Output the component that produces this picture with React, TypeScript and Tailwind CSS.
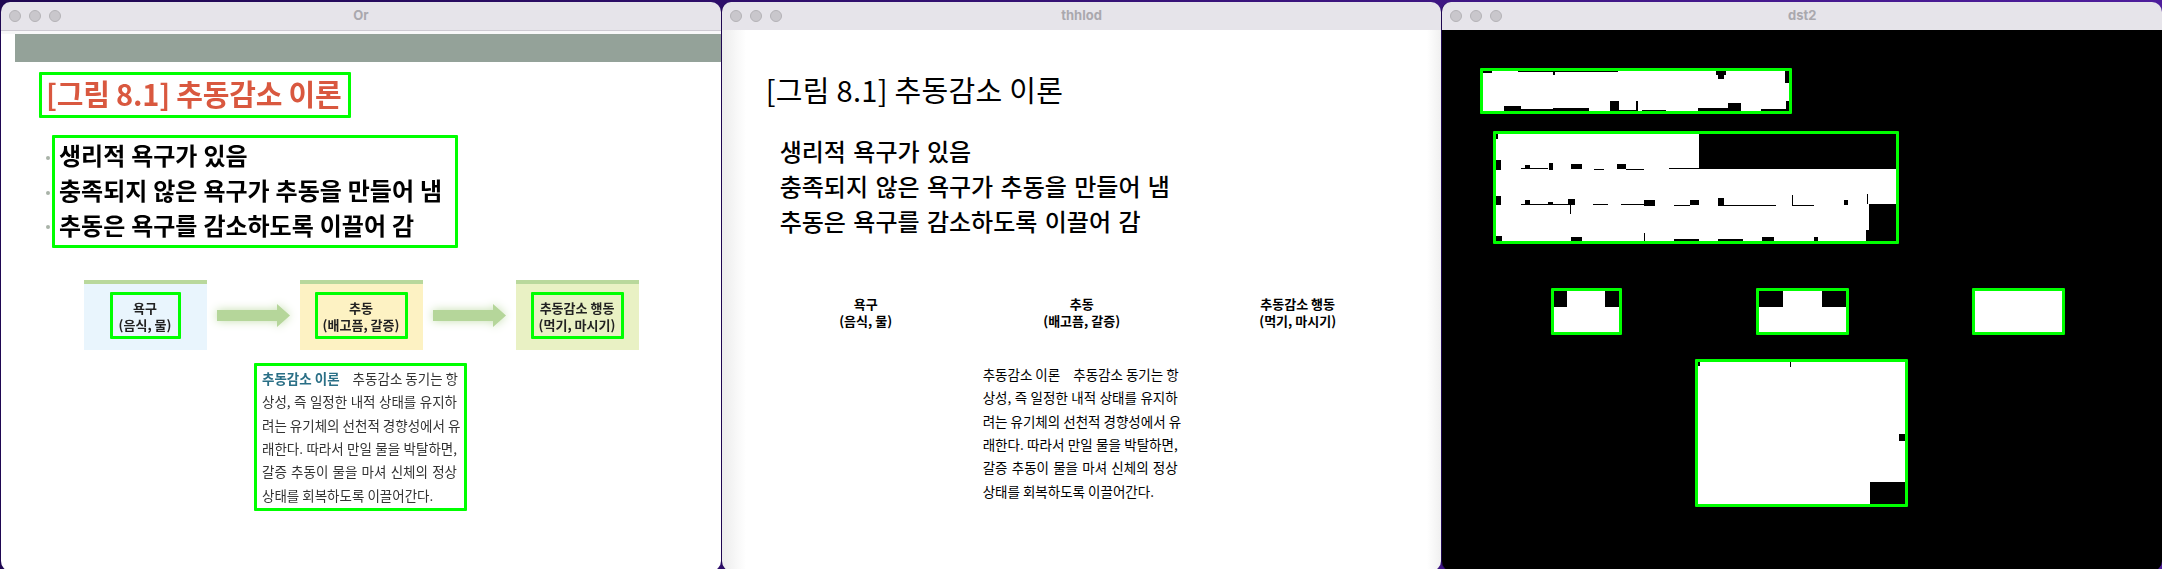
import React from "react";

type Variant = "source" | "threshold" | "mask";
type R = [number, number, number, number];

const FONT = "font-['Noto_Sans_CJK_KR','Noto_Sans',sans-serif]";

function Frame({ variant, className = "", children }: { variant: Variant; className?: string; children?: React.ReactNode }) {
  const border = variant === "threshold" ? "border-transparent" : "border-[#00ff00]";
  return <div className={`border-[3px] rounded-[1px] ${border} ${className}`}>{children}</div>;
}

function Blob({ w, h, cuts }: { w: number; h: number; cuts: R[] }) {
  return (
    <svg viewBox={`0 0 ${w} ${h}`} preserveAspectRatio="none" className="block w-full h-full" shapeRendering="crispEdges">
      <rect x={0} y={0} width={w} height={h} fill="#fff" />
      {cuts.map(([x, y, cw, ch], i) => (
        <rect key={i} x={x} y={y} width={cw} height={ch} fill="#000" />
      ))}
    </svg>
  );
}

const titleCuts: R[] = [
  [0, 0, 9, 2], [35, 0, 35, 1], [70, 0, 2, 4], [72, 0, 63, 1], [234, 0, 10, 4], [236, 4, 6, 4], [303, 0, 4, 12],
  [21, 36, 17, 5], [38, 39, 32, 2], [70, 38, 36, 3], [127, 31, 9, 10], [136, 40, 18, 1], [154, 31, 2, 10],
  [160, 40, 24, 1], [216, 38, 30, 3], [246, 33, 13, 8], [279, 39, 25, 2], [304, 31, 3, 10],
];
const listCuts: R[] = [
  [0, 0, 2, 5], [203, 0, 197, 35],
  [0, 26, 5, 10], [25, 34, 27, 1], [29, 31, 5, 3], [53, 29, 4, 7], [75, 30, 11, 5], [98, 35, 10, 1], [121, 30, 9, 5],
  [130, 35, 18, 1], [173, 34, 30, 1],
  [0, 63, 5, 9], [25, 71, 47, 1], [29, 67, 5, 4], [52, 69, 5, 3], [72, 66, 7, 6], [74, 72, 1, 9], [97, 71, 15, 1],
  [125, 71, 23, 1], [148, 67, 11, 6], [178, 72, 16, 1], [194, 67, 9, 5], [222, 65, 6, 8], [228, 72, 52, 1],
  [296, 62, 1, 10], [296, 72, 22, 1], [348, 67, 4, 5], [371, 61, 1, 10],
  [373, 71, 27, 37], [370, 97, 3, 11],
  [0, 103, 6, 5], [75, 104, 11, 4], [148, 100, 1, 8], [178, 106, 25, 2], [222, 106, 25, 2], [266, 104, 12, 4], [318, 104, 4, 4],
];
const paraCuts: R[] = [
  [0, 0, 2, 4], [92, 0, 1, 5], [201, 72, 6, 7], [172, 120, 35, 23], [85, 142, 22, 1],
];

function Arrow() {
  return (
    <svg width="73" height="23" viewBox="0 0 73 23" className="overflow-visible drop-shadow-[0_0_5px_#c6dfb0]">
      <path d="M0 6H60V0L73 11.5L60 23V17H0Z" fill="#b5d69a" />
    </svg>
  );
}

const items = [
  { a: "욕구", b: "(음식, 물)", w: "w-[71px]", fill: "bg-[#e9f5fd]", cuts: [[0, 0, 13, 16], [51, 0, 14, 16]] as R[], vw: 65 },
  { a: "추동", b: "(배고픔, 갈증)", w: "w-[93px]", fill: "bg-[#fdf2c3]", cuts: [[0, 0, 24, 16], [63, 0, 24, 16]] as R[], vw: 87 },
  { a: "추동감소 행동", b: "(먹기, 마시기)", w: "w-[93px]", fill: "bg-[#e9f1c4]", cuts: [] as R[], vw: 87 },
];

const lines = [
  "상성, 즉 일정한 내적 상태를 유지하",
  "려는 유기체의 선천적 경향성에서 유",
  "래한다. 따라서 만일 물을 박탈하면,",
  "갈증 추동이 물을 마셔 신체의 정상",
];

function Slide({ variant }: { variant: Variant }) {
  const src = variant === "source";
  const mask = variant === "mask";
  const soft = src ? "blur-[0.35px]" : "";
  return (
    <div className={`flex flex-col h-full ${FONT}`}>
      {src ? <div className="h-[28px] ml-[14px] bg-[#94a299]" /> : <div className="h-[28px]" />}

      <Frame variant={variant} className="mt-[10px] ml-[38px] w-[312px] h-[46px] flex items-center">
        {mask ? (
          <Blob w={307} h={41} cuts={titleCuts} />
        ) : (
          <span
            className={`text-[29px] leading-none whitespace-nowrap ${soft} ${
              src
                ? "pl-[4px] mb-[3px] tracking-[-0.2px] font-bold text-[#d9583f]"
                : "pl-[3px] mb-[4px] tracking-[0.3px] font-normal text-black"
            }`}
          >
            [그림 8.1] 추동감소 이론
          </span>
        )}
      </Frame>

      <Frame variant={variant} className={`relative mt-[17px] ml-[51px] w-[406px] h-[113px] flex flex-col justify-center ${mask ? "" : "pb-[3px]"}`}>
        {mask ? (
          <Blob w={400} h={108} cuts={listCuts} />
        ) : (
          ["생리적 욕구가 있음", "충족되지 않은 욕구가 추동을 만들어 냄", "추동은 욕구를 감소하도록 이끌어 감"].map((t) => (
            <div key={t} className="relative flex items-center h-[37px]">
              {src && <span className="absolute left-[-9px] top-[18px] w-[4px] h-[4px] rounded-full bg-[#a9b3a8]" />}
              <span
                className={`pl-[4px] text-[24px] leading-none whitespace-nowrap text-black ${soft} ${
                  src ? "font-bold [word-spacing:0.5px]" : "font-medium [word-spacing:2px]"
                }`}
              >
                {t}
              </span>
            </div>
          ))
        )}
      </Frame>

      <div className="mt-[32px] ml-[82.5px] flex items-center gap-[10px] h-[70px]">
        {items.map((it, i) => (
          <React.Fragment key={it.a}>
            {i > 0 && (src ? <Arrow /> : <div className="w-[73px]" />)}
            <div className={`w-[123px] h-[70px] flex flex-col items-center ${src ? `${it.fill} border-t-4 border-[#b9d89c]` : "pt-[4px]"}`}>
              <Frame variant={variant} className={`mt-[8px] h-[47px] ${it.w} flex flex-col items-center justify-center`}>
                {mask ? (
                  <Blob w={it.vw} h={41} cuts={it.cuts} />
                ) : (
                  <div className={`text-center text-[13px] leading-[17px] font-bold whitespace-nowrap ${src ? "text-[#222]" : "text-black"} ${soft}`}>
                    <div>{it.a}</div>
                    <div>{it.b}</div>
                  </div>
                )}
              </Frame>
            </div>
          </React.Fragment>
        ))}
      </div>

      <Frame variant={variant} className="mt-[13px] ml-[253px] w-[213px] h-[148px] flex flex-col justify-center">
        {mask ? (
          <Blob w={207} h={142} cuts={paraCuts} />
        ) : (
          <div className={`pl-[5px] pr-[7px] text-[13.5px] leading-[23.3px] ${src ? "text-[#333]" : "text-black"} ${soft}`}>
            <div className="whitespace-nowrap [text-align-last:justify]">
              <span className={src ? "font-bold text-[#2a6f86] mr-[10px]" : "mr-[10px]"}>추동감소 이론</span> 추동감소 동기는 항
            </div>
            {lines.map((l) => (
              <div key={l} className="whitespace-nowrap [text-align-last:justify]">{l}</div>
            ))}
            <div className="whitespace-nowrap">상태를 회복하도록 이끌어간다.</div>
          </div>
        )}
      </Frame>
    </div>
  );
}

function Window({ title, variant }: { title: string; variant: Variant }) {
  const body =
    variant === "source"
      ? "bg-white"
      : variant === "threshold"
        ? "bg-[linear-gradient(to_right,#ececec,#ffffff_24px,#ffffff_calc(100%-14px),#f0f0f0)]"
        : "bg-black";
  return (
    <div className="h-[569px] flex flex-col rounded-[10px] overflow-hidden border-l border-[#1f0752]">
      <div className="relative h-[28px] shrink-0 flex items-center bg-[#e6e4ea]">
        <div className="flex gap-[8px] pl-[8px]">
          <span className="w-[12px] h-[12px] rounded-full bg-[#c9c7cc] border border-[#b4b2b7]" />
          <span className="w-[12px] h-[12px] rounded-full bg-[#c9c7cc] border border-[#b4b2b7]" />
          <span className="w-[12px] h-[12px] rounded-full bg-[#c9c7cc] border border-[#b4b2b7]" />
        </div>
        <span className="absolute inset-x-0 text-center text-[13px] font-bold text-[#aaa8ae] font-['Inter',sans-serif]">{title}</span>
      </div>
      {variant === "source" && <div className="h-[4px] shrink-0 border-t border-[#cdcad2] bg-[#f7f7f8]" />}
      <div className={`flex-1 ${body}`}>
        <Slide variant={variant} />
      </div>
    </div>
  );
}

export default function App() {
  return (
    <div className="h-[569px] overflow-hidden pt-[2px] grid grid-cols-3 bg-gradient-to-r from-[#1f0752] to-[#4e1d9c]">
      <Window title="Or" variant="source" />
      <Window title="thhlod" variant="threshold" />
      <Window title="dst2" variant="mask" />
    </div>
  );
}
